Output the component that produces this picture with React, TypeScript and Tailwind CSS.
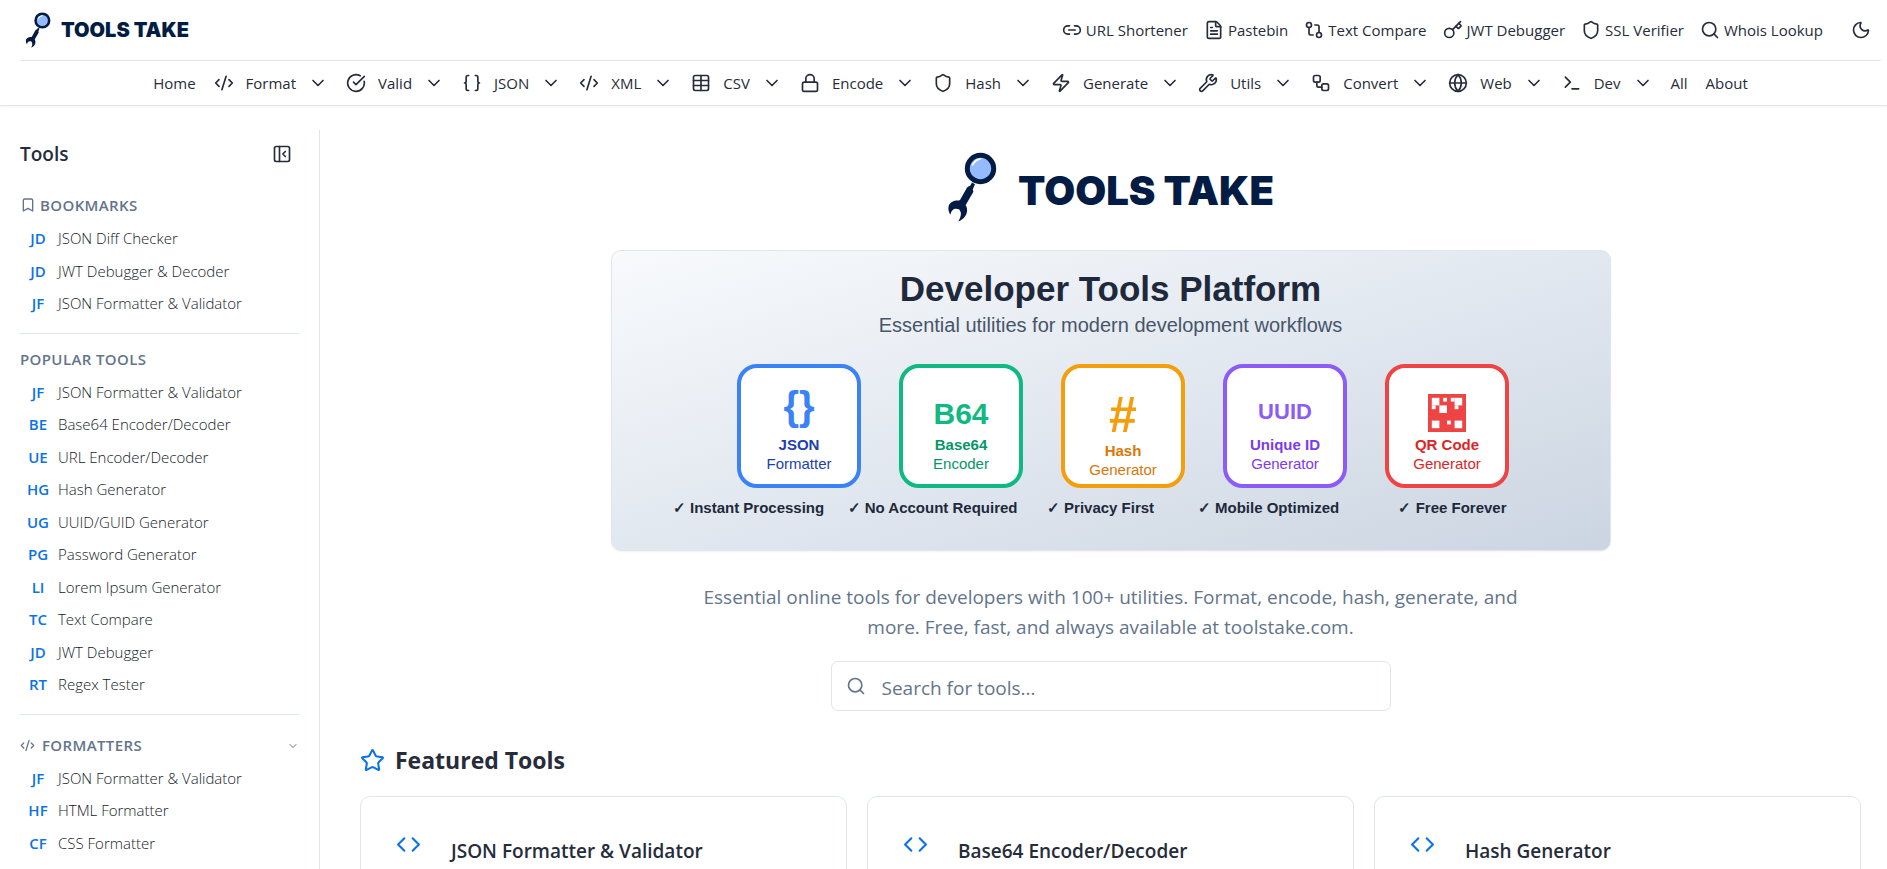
import React from "react";
import {
  Bookmark, Braces, ChevronDown, CircleCheckBig, Code, CodeXml, FileText, GitCompare, Globe, Key, Link2,
  Lock, Moon, PanelLeftClose, Search, Shield, Star, Table, Terminal, Workflow, Wrench, Zap,
} from "lucide-react";

type Icon = React.ComponentType<{ className?: string }>;

const quickLinks: { label: string; icon: Icon }[] = [
  { label: "URL Shortener", icon: Link2 },
  { label: "Pastebin", icon: FileText },
  { label: "Text Compare", icon: GitCompare },
  { label: "JWT Debugger", icon: Key },
  { label: "SSL Verifier", icon: Shield },
  { label: "Whois Lookup", icon: Search },
];

const menus: { label: string; icon: Icon }[] = [
  { label: "Format", icon: CodeXml },
  { label: "Valid", icon: CircleCheckBig },
  { label: "JSON", icon: Braces },
  { label: "XML", icon: CodeXml },
  { label: "CSV", icon: Table },
  { label: "Encode", icon: Lock },
  { label: "Hash", icon: Shield },
  { label: "Generate", icon: Zap },
  { label: "Utils", icon: Wrench },
  { label: "Convert", icon: Workflow },
  { label: "Web", icon: Globe },
  { label: "Dev", icon: Terminal },
];

const bookmarks = [
  ["JD", "JSON Diff Checker"],
  ["JD", "JWT Debugger & Decoder"],
  ["JF", "JSON Formatter & Validator"],
];
const popular = [
  ["JF", "JSON Formatter & Validator"],
  ["BE", "Base64 Encoder/Decoder"],
  ["UE", "URL Encoder/Decoder"],
  ["HG", "Hash Generator"],
  ["UG", "UUID/GUID Generator"],
  ["PG", "Password Generator"],
  ["LI", "Lorem Ipsum Generator"],
  ["TC", "Text Compare"],
  ["JD", "JWT Debugger"],
  ["RT", "Regex Tester"],
];
const formatters = [
  ["JF", "JSON Formatter & Validator"],
  ["HF", "HTML Formatter"],
  ["CF", "CSS Formatter"],
];

function LogoMark({ className }: { className: string }) {
  return (
    <svg viewBox="0 0 50 70" className={className} aria-hidden="true">
      <circle cx="33.5" cy="16.5" r="13.2" fill="#93bbfd" stroke="#031c43" strokeWidth="5" />
      <path d="M24.5 13.5q1.500-5.500 8-7.200l3 .4q-7 2-9.500 7z" fill="#fff" />
      <path d="M25 30.500l3 1.800-2.200 5 .6 2.500-7.800 13.500c3.200 4.500 1.500 13-7.200 16.200 2.200-4 4-8.500.6-12.200-4.200-1.500-7.500 0-8.500 5.500C-.5 57 1 49.500 9.500 48.600c1.500 0 2.500.2 3.500-.6l6.500-11.500c.5-1.500 2-2.500 3.500-2.500z" fill="#031c43" />
    </svg>
  );
}

function ToolList({ items }: { items: string[][] }) {
  return (
    <ul>
      {items.map(([abbr, name]) => (
        <li key={name}>
          <a href="#" className="flex items-center gap-[6px] px-1 py-[5px] text-[15px] leading-normal">
            <span className="w-7 text-center font-semibold text-[#0b72e7]">{abbr}</span>
            <span className="font-light text-[#141a28]">{name}</span>
          </a>
        </li>
      ))}
    </ul>
  );
}

const features = [
  { label: "Instant Processing", w: "w-[184px]" },
  { label: "No Account Required", w: "w-[184px]" },
  { label: "Privacy First", w: "w-[152px]" },
  { label: "Mobile Optimized", w: "w-[184px]" },
  { label: "Free Forever", w: "w-[184px]" },
];

function HeroCard({ border, text, title, sub, children, low }: { border: string; text: string; title: string; sub: string; children: React.ReactNode; low?: boolean }) {
  return (
    <div className={`flex h-[124px] w-[124px] flex-col items-center justify-end rounded-[20px] border-4 bg-white text-[15px] ${low ? "pb-[5px]" : "pb-[11px]"} ${border}`}>
      {children}
      <span className={`font-bold leading-[19px] ${text}`}>{title}</span>
      <span className={`leading-[19px] ${text}`}>{sub}</span>
    </div>
  );
}

function QrGlyph() {
  const cells = [[1, 1, 2], [4, 1, 1], [6, 1, 1], [7, 1, 2], [1, 3, 1], [3, 3, 2], [7, 3, 1], [1, 7, 2], [5, 7, 1], [7, 7, 2]];
  return (
    <svg viewBox="0 0 10 10" className="mb-[3px] h-[38px] w-[38px]" aria-hidden="true">
      <rect width="10" height="10" fill="#ef4444" />
      {cells.map(([x, y, s]) => <rect key={`${x}-${y}`} x={x} y={y} width={s} height={s} fill="#fff" />)}
    </svg>
  );
}

export default function App() {
  return (
    <div className="h-screen overflow-hidden bg-white font-['Open_Sans',sans-serif] text-[#262c3a]">
      <header className="border-b border-[#dfe6ee] pl-5 pr-[6px] shadow-xs">
        <div className="flex h-[60px] items-center justify-between pl-[5px] pr-[10px]">
          <a href="#" className="flex items-center gap-[10px]" aria-label="Tools Take home">
            <LogoMark className="h-[36px] w-[26px]" />
            <span className="font-['Inter',sans-serif] text-[20px] font-black text-[#031c43]">TOOLS TAKE</span>
          </a>
          <div className="flex items-center">
            <nav className="flex items-center gap-4 text-[15px]">
              {quickLinks.map(({ label, icon: I }) => (
                <a key={label} href="#" className="flex items-center gap-1">
                  <I className="h-5 w-5" />
                  {label}
                </a>
              ))}
            </nav>
            <button type="button" aria-label="Toggle dark mode" className="ml-7">
              <Moon className="h-5 w-5" />
            </button>
          </div>
        </div>
        <nav className="flex h-[45px] items-center justify-center gap-[18px] border-t border-[#dfe6ee] text-[15px]">
          <a href="#">Home</a>
          {menus.map(({ label, icon: I }) => (
            <button key={label} type="button" className="flex items-center gap-3">
              <I className="h-5 w-5" />
              {label}
              <ChevronDown className="h-5 w-5" />
            </button>
          ))}
          <a href="#">All</a>
          <a href="#">About</a>
        </nav>
      </header>

      <div className="flex pt-6">
        <aside className="w-80 shrink-0 border-r border-[#dfe6ee] px-5">
          <div className="flex h-[48px] items-center justify-between pr-[7px]">
            <h2 className="text-[19px] font-semibold">Tools</h2>
            <button type="button" aria-label="Collapse sidebar"><PanelLeftClose className="h-5 w-5" /></button>
          </div>
          <section className="mt-4 border-b border-[#dfe6ee] pb-[13px]">
            <h3 className="flex h-[22px] items-center gap-1 text-[15px] font-semibold tracking-wide text-[#64748b]">
              <Bookmark className="h-4 w-4" />
              BOOKMARKS
            </h3>
            <div className="pt-[6px]"><ToolList items={bookmarks} /></div>
          </section>
          <section className="mt-[15px] border-b border-[#dfe6ee] pb-[13px]">
            <h3 className="flex h-[22px] items-center text-[15px] font-semibold tracking-wide text-[#64748b]">POPULAR TOOLS</h3>
            <div className="pt-[5px]"><ToolList items={popular} /></div>
          </section>
          <section className="mt-5">
            <button type="button" className="flex h-[22px] w-full items-center gap-[7px] text-[15px] font-semibold tracking-wide text-[#64748b]">
              <CodeXml className="h-[15px] w-[15px]" />
              FORMATTERS
              <ChevronDown className="ml-auto h-3 w-3" />
            </button>
            <div className="pt-[5px]"><ToolList items={formatters} /></div>
          </section>
        </aside>

        <main className="min-w-0 flex-1 pl-10 pr-[26px] pt-[22px]">
          <section className="flex flex-col items-center">
            <div className="flex items-center gap-[21px]">
              <LogoMark className="h-[70px] w-[50px]" />
              <span className="pt-2 font-['Inter',sans-serif] text-[40px] font-black leading-[60px] text-[#031c43]">TOOLS TAKE</span>
            </div>

            <div className="mt-7 flex h-[301px] w-full max-w-[1000px] flex-col items-center rounded-[10px] border border-[#dfe6ee] bg-linear-to-br from-[#f8fafc] via-[#e2e8f0] to-[#cbd5e1] pt-[18px] font-['Liberation_Sans',sans-serif] shadow-xs">
              <h1 className="text-[35px] font-bold leading-[40px] text-[#1e293b]">Developer Tools Platform</h1>
              <p className="text-[20px] leading-[32px] text-[#475569]">Essential utilities for modern development workflows</p>
              <div className="mt-[23px] flex gap-[38px] pl-[25px]">
                <HeroCard border="border-[#3b82f6]" text="text-[#1e40af]" title="JSON" sub="Formatter">
                  <span className="mb-[9px] text-[40px] font-bold leading-[40px] text-[#3b82f6]">{"{}"}</span>
                </HeroCard>
                <HeroCard border="border-[#10b981]" text="text-[#059669]" title="Base64" sub="Encoder">
                  <span className="mb-1 text-[30px] font-bold leading-[34px] text-[#10b981]">B64</span>
                </HeroCard>
                <HeroCard border="border-[#f59e0b]" text="text-[#d97706]" title="Hash" sub="Generator" low>
                  <span className="mb-[6px] text-[50px] font-bold leading-[40px] text-[#f59e0b]">#</span>
                </HeroCard>
                <HeroCard border="border-[#8b5cf6]" text="text-[#7c3aed]" title="Unique ID" sub="Generator">
                  <span className="mb-2 text-[22px] font-bold leading-[30px] text-[#8b5cf6]">UUID</span>
                </HeroCard>
                <HeroCard border="border-[#ef4444]" text="text-[#dc2626]" title="QR Code" sub="Generator">
                  <QrGlyph />
                </HeroCard>
              </div>
              <ul className="mt-[10px] flex pr-[20px] text-[15px] font-bold leading-5 text-[#1e293b]">
                {features.map((f) => <li key={f.label} className={`text-center ${f.w}`}>✓ {f.label}</li>)}
              </ul>
            </div>

            <p className="mt-[31px] max-w-[840px] text-center text-[19px] leading-[30px] text-[#64748b]">
              Essential online tools for developers with 100+ utilities. Format, encode, hash, generate, and more. Free, fast, and always available at toolstake.com.
            </p>

            <label className="mt-[19px] flex h-[50px] w-full max-w-[560px] items-center gap-4 rounded-[7px] border border-[#dfe6ee] px-[14px]">
              <Search className="h-5 w-5 text-[#64748b]" />
              <input type="search" aria-label="Search for tools" placeholder="Search for tools..." className="min-w-0 flex-1 pt-1 text-[19px] outline-none placeholder:text-[#64748b]" />
            </label>
          </section>

          <section className="mt-[33px]">
            <h2 className="flex items-center gap-[10px] text-[23px] leading-8 font-bold">
              <Star className="h-[25px] w-[25px] text-[#0b72e7]" />
              Featured Tools
            </h2>
            <div className="mt-5 grid grid-cols-3 gap-5">
              {["JSON Formatter & Validator", "Base64 Encoder/Decoder", "Hash Generator"].map((name) => (
                <article key={name} className="flex h-[200px] items-start gap-[30px] rounded-[10px] border border-[#dfe6ee] px-[35px] pt-[35px]">
                  <Code className="h-[25px] w-[25px] text-[#0b72e7]" />
                  <h3 className="pt-1 text-[19px] font-semibold leading-[30px]">{name}</h3>
                </article>
              ))}
            </div>
          </section>
        </main>
      </div>
    </div>
  );
}
